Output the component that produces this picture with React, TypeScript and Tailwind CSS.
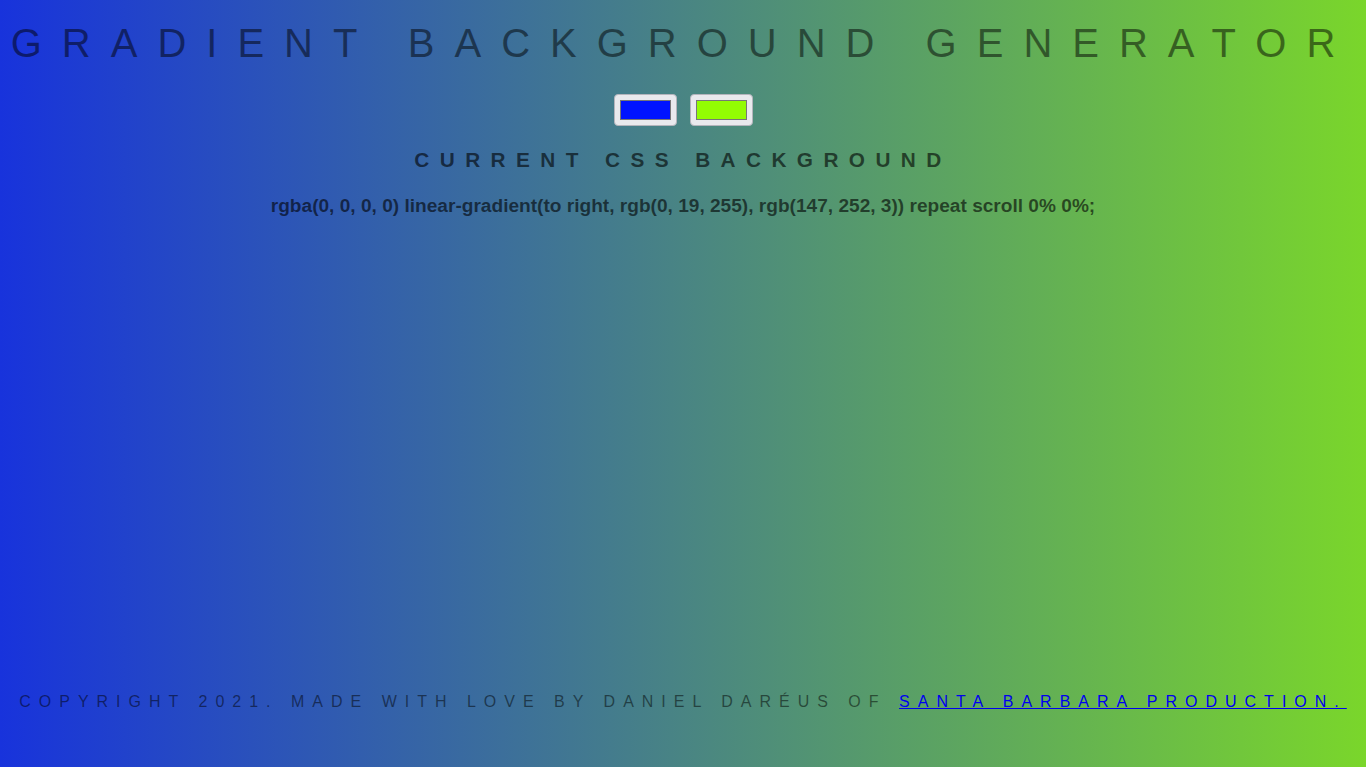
const ColorSwatch = ({ color }: { color: string }) => {
  return (
    <div className="w-[63px] h-[32px] rounded-[4px] border border-[#b4b4bc] bg-[#e9e9ed] px-[5px] py-[5px]">
      <div className="w-full h-full border border-[#777777]" style={{ backgroundColor: color }} />
    </div>
  )
}

const App = () => {
  return (
    <div className="min-h-[767px] w-full flex flex-col items-center bg-[linear-gradient(to_right,#1833dc,#7ad62b)] font-['Liberation_Sans',Arial,sans-serif]">
      <h1 className="pt-[23px] text-[40px] leading-[40px] tracking-[0.5em] text-black/50 text-center whitespace-nowrap">
        GRADIENT BACKGROUND GENERATOR
      </h1>

      <div className="mt-[31px] flex gap-[13px]">
        <ColorSwatch color="#0013ff" />
        <ColorSwatch color="#93fc03" />
      </div>

      <h3 className="mt-[22px] text-[20.8px] leading-[24px] font-bold tracking-[0.5em] text-black/60 text-center">
        CURRENT CSS BACKGROUND
      </h3>

      <p className="mt-[22px] text-[19.1px] leading-[24px] font-bold text-black/60 text-center">
        rgba(0, 0, 0, 0) linear-gradient(to right, rgb(0, 19, 255), rgb(147, 252, 3)) repeat scroll 0% 0%;
      </p>

      <footer className="mt-auto pb-[55px] text-[16px] leading-[20px] tracking-[0.5em] text-black/50 text-center whitespace-nowrap">
        COPYRIGHT 2021. MADE WITH LOVE BY DANIEL DARÉUS OF{' '}
        <a href="#" className="text-[#0000ee] underline">
          SANTA BARBARA PRODUCTION.
        </a>
      </footer>
    </div>
  )
}

export default App
